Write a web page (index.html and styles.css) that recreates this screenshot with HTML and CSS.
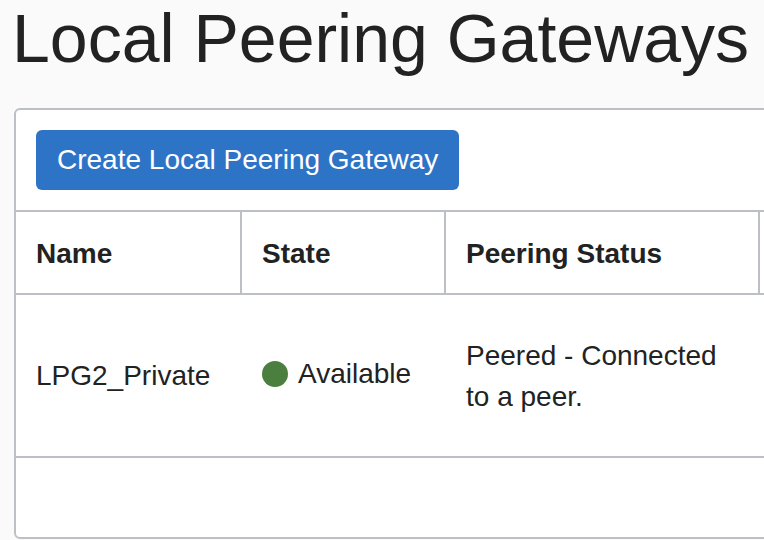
FILE: index.html
```html
<!DOCTYPE html>
<html lang="en">
<head>
<meta charset="utf-8">
<title>Local Peering Gateways</title>
<link rel="stylesheet" href="styles.css">
</head>
<body>
  <h1 class="page-title">Local Peering Gateways</h1>
  <div class="panel">
    <div class="toolbar">
      <button class="btn-primary" type="button">Create Local Peering Gateway</button>
    </div>
    <table class="grid">
      <colgroup>
        <col class="c-name">
        <col class="c-state">
        <col class="c-status">
        <col class="c-rest">
      </colgroup>
      <thead>
        <tr>
          <th>Name</th>
          <th>State</th>
          <th>Peering Status</th>
          <th></th>
        </tr>
      </thead>
      <tbody>
        <tr class="data-row">
          <td>LPG2_Private</td>
          <td><span class="state"><span class="dot"></span>Available</span></td>
          <td>Peered - Connected to a peer.</td>
          <td></td>
        </tr>
        <tr class="empty-row">
          <td></td><td></td><td></td><td></td>
        </tr>
      </tbody>
    </table>
  </div>
</body>
</html>
```

FILE: styles.css
```css
html, body {
  margin: 0;
  padding: 0;
  overflow: hidden;
}
body {
  background: #fafafa;
  font-family: "Liberation Sans", Arial, Helvetica, sans-serif;
  color: #222;
  width: 764px;
  height: 540px;
}
.page-title {
  margin: 0 0 32px 0;
  padding-left: 12px;
  font-size: 68px;
  font-weight: 400;
  line-height: 76px;
  color: #222;
  white-space: nowrap;
}
.panel {
  margin-left: 14px;
  width: 1100px;
  background: #fff;
  border: 2px solid #bcc0c4;
  border-radius: 6px;
  overflow: hidden;
}
.toolbar {
  padding: 20px;
  border-bottom: 2px solid #bcc0c4;
}
.btn-primary {
  display: block;
  height: 60px;
  padding: 0 21px;
  border: 0;
  border-radius: 6px;
  background: #2d74c7;
  color: #fff;
  font-family: "Liberation Sans", Arial, Helvetica, sans-serif;
  font-size: 28px;
  line-height: 60px;
  white-space: nowrap;
}
.grid {
  border-collapse: separate;
  border-spacing: 0;
  table-layout: fixed;
  width: 1096px;
  font-size: 28px;
  line-height: 41px;
}
.c-name { width: 226px; }
.c-state { width: 204px; }
.c-status { width: 314px; }
.c-rest { width: 352px; }
.grid th {
  box-sizing: border-box;
  height: 83px;
  padding: 2px 20px 0 20px;
  text-align: left;
  font-weight: 700;
  line-height: 40px;
  vertical-align: middle;
  border-right: 2px solid #bcc0c4;
  border-bottom: 2px solid #bcc0c4;
}
.grid td {
  box-sizing: border-box;
  padding: 0 20px;
  vertical-align: middle;
}
.data-row td {
  height: 163px;
  border-bottom: 2px solid #bcc0c4;
}
.data-row td:nth-child(3) {
  padding-right: 30px;
}
.empty-row td {
  height: 79px;
}
.state {
  display: inline-flex;
  align-items: center;
  white-space: nowrap;
}
.dot {
  display: inline-block;
  width: 26px;
  height: 26px;
  margin-right: 10px;
  border-radius: 50%;
  background: #4a7f40;
}
```
